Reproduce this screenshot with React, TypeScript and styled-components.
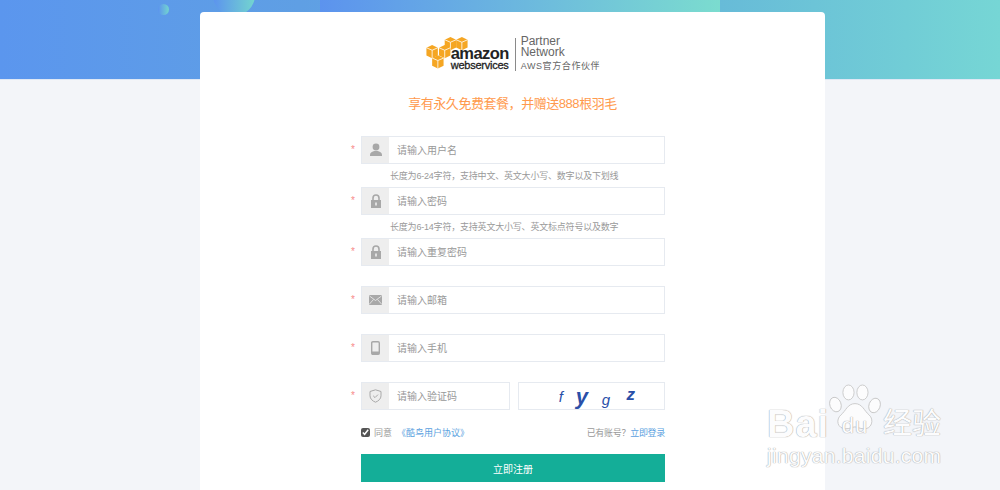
import styled, { createGlobalStyle } from "styled-components";

const GlobalStyle = createGlobalStyle`
  html, body {
    margin: 0;
    padding: 0;
    height: 100%;
    overflow: hidden;
    background: #f3f5f9;
    font-family: "Liberation Sans", "Noto Sans CJK SC", sans-serif;
  }
  * { box-sizing: border-box; }
  input::placeholder { color: #999; opacity: 1; }
`;

const Page = styled.div`
  position: relative;
  width: 1000px;
  height: 490px;
  overflow: hidden;
`;

const Banner = styled.header`
  position: relative;
  height: 80px;
  overflow: hidden;
  background: linear-gradient(90deg, #5b96ee 0%, #5f9fe4 30%, #67bbd8 72%, #76d6d5 100%);
  border-bottom: 1px solid #dfe8f5;
`;

const BannerPanel = styled.div`
  position: absolute;
  left: 320px;
  top: 0;
  width: 400px;
  height: 30px;
  background: linear-gradient(90deg, #5c93ee 0%, #7bdccf 100%);
`;

const Bubble = styled.div<{ $size: number; $left: number; $top: number }>`
  position: absolute;
  left: ${(p) => p.$left}px;
  top: ${(p) => p.$top}px;
  width: ${(p) => p.$size}px;
  height: ${(p) => p.$size}px;
  border-radius: 50%;
  background: linear-gradient(90deg, #5c93ee 0%, #73d5cf 100%);
`;

const Card = styled.main`
  position: relative;
  width: 625px;
  height: 490px;
  margin: -68px 0 0 200px;
  background: #fff;
  border-radius: 4px 4px 0 0;
  padding-top: 22px;
  display: flex;
  flex-direction: column;
  align-items: center;
`;

const LogoRow = styled.div`
  display: flex;
  align-items: center;
  height: 40px;
  margin-left: 1px;
`;

const AwsMark = styled.div`
  width: 25px;
  height: 32px;
  margin-top: -3px;
  flex: none;
  overflow: visible;
`;

const Wordmark = styled.div`
  display: flex;
  flex-direction: column;
  align-items: flex-start;
  padding-top: 9px;
  color: #232323;
  font-weight: 700;
`;

const Amazon = styled.span`
  font-size: 16.5px;
  line-height: 14px;
  letter-spacing: -0.6px;
`;

const WebServices = styled.span`
  font-size: 11px;
  line-height: 11px;
  letter-spacing: -0.25px;
  font-weight: 400;
  -webkit-text-stroke: 0.3px #232323;
`;

const LogoRule = styled.div`
  width: 1px;
  height: 33px;
  margin: 0 5px 0 6px;
  background: #8a8a8a;
`;

const PartnerBlock = styled.div`
  display: flex;
  flex-direction: column;
  color: #666;
`;

const PartnerLine = styled.span`
  font-size: 12px;
  line-height: 11px;
`;

const PartnerCn = styled.span`
  font-size: 9px;
  line-height: 13px;
  margin-top: 2px;
  letter-spacing: 0.6px;
  color: #666;
`;

const Slogan = styled.h2`
  margin: 20px 0 0;
  font-size: 13px;
  line-height: 20px;
  font-weight: 400;
  letter-spacing: -0.45px;
  color: #ff9a4d;
`;

const Form = styled.form`
  width: 304px;
  margin: 22px 0 0 1px;
  display: flex;
  flex-direction: column;
`;

const Field = styled.div<{ $gap: number }>`
  position: relative;
  display: flex;
  flex-direction: column;
  height: ${(p) => p.$gap}px;
`;

const Star = styled.span`
  position: absolute;
  left: -10px;
  top: 8px;
  font-size: 10px;
  line-height: 12px;
  color: #f78b8b;
`;

const InputRow = styled.div`
  display: flex;
  gap: 8px;
`;

const InputBox = styled.div<{ $width?: number }>`
  display: flex;
  width: ${(p) => p.$width ?? 304}px;
  height: 28px;
  border: 1px solid #e6eaf0;
  background: #fff;
`;

const IconCell = styled.div`
  width: 27px;
  flex: none;
  display: flex;
  align-items: center;
  justify-content: center;
  background: #eeeeee;
`;

const TextInput = styled.input`
  flex: 1;
  min-width: 0;
  border: 0;
  outline: 0;
  padding: 0 8px;
  background: transparent;
  font: 10px "Liberation Sans", "Noto Sans CJK SC", sans-serif;
  color: #666;
`;

const Hint = styled.div`
  margin: 5px 0 0 29px;
  font-size: 9px;
  line-height: 14px;
  letter-spacing: -0.2px;
  color: #9a9a9a;
  white-space: nowrap;
`;

const Captcha = styled.div`
  width: 147px;
  height: 28px;
  border: 1px solid #e6eaf0;
  display: flex;
  align-items: flex-start;
  color: #2a4fa8;
`;

const CaptchaGlyph = styled.span<{ $left: number; $top: number; $size: number; $bold?: boolean }>`
  width: ${(p) => p.$left}px;
  padding-top: ${(p) => p.$top}px;
  font-size: ${(p) => p.$size}px;
  font-weight: ${(p) => (p.$bold ? 700 : 400)};
  line-height: 1;
  text-align: right;
  font-style: italic;
`;

const AgreeRow = styled.div`
  display: flex;
  align-items: center;
  justify-content: space-between;
  height: 14px;
  margin-top: 3px;
  font-size: 9px;
  color: #9a9a9a;
`;

const AgreeLeft = styled.label`
  display: flex;
  align-items: center;
`;

const Tick = styled.input`
  width: 9px;
  height: 9px;
  margin: 0 4px 0 0;
  accent-color: #555;
`;

const TextLink = styled.a<{ $indent?: number }>`
  margin-left: ${(p) => p.$indent ?? 0}px;
  color: #5a9fe0;
  text-decoration: none;
`;

const LoginHint = styled.span`
  letter-spacing: -0.3px;
`;

const SubmitButton = styled.button`
  width: 304px;
  height: 28px;
  margin-top: 15px;
  border: 0;
  background: #14ae98;
  color: #fff;
  font: 10px "Liberation Sans", "Noto Sans CJK SC", sans-serif;
`;

const Watermark = styled.div`
  position: absolute;
  left: 767px;
  top: 382px;
  width: 200px;
  height: 90px;
  color: #fcfcfd;
  text-shadow: 0 0 1px #a8a8a8, 0 0 1px #a8a8a8;
  pointer-events: none;
`;

const WatermarkTop = styled.div`
  display: flex;
  align-items: flex-end;
  height: 60px;
`;

const WatermarkBai = styled.span`
  width: 116px;
  font-size: 38px;
  line-height: 36px;
  font-weight: 700;
  letter-spacing: 1px;
`;

const WatermarkCn = styled.span`
  font-size: 29px;
  line-height: 36px;
  letter-spacing: 0;
`;

const WatermarkUrl = styled.div`
  margin-top: 2px;
  font-size: 21px;
  line-height: 24px;
  white-space: nowrap;
  letter-spacing: 0.3px;
`;

const PawBox = styled.div`
  position: absolute;
  left: 61px;
  top: 1px;
  width: 54px;
  height: 58px;
`;

const PawDu = styled.span`
  position: absolute;
  left: 7px;
  top: 31px;
  width: 40px;
  text-align: center;
  font-size: 22px;
  line-height: 24px;
  letter-spacing: 1px;
`;

const Cube = ({ x, y }: { x: number; y: number }) => (
  <g transform={`translate(${x} ${y})`}>
    <path d="M0 2.400 5 0l5 2.400v6.800L5 11.600 0 9.200z" fill="#f5a623" />
    <path d="M0 2.400 5 4.600l5-2.200M5 4.600v7" fill="none" stroke="#fff" strokeWidth="0.7" />
  </g>
);

const UserIcon = () => (
  <svg width="14" height="14" viewBox="0 0 14 14" fill="#a8a8a8">
    <circle cx="7" cy="4" r="3.400" />
    <path d="M1 13v-1.600C1 9.600 3.400 8.600 5.400 8h3.200c2 .6 4.400 1.600 4.400 3.400V13z" />
  </svg>
);

const LockIcon = () => (
  <svg width="12" height="14" viewBox="0 0 12 14">
    <path d="M3 6V4a3 3 0 0 1 6 0v2" fill="none" stroke="#a8a8a8" strokeWidth="1.600" />
    <rect x="1" y="6" width="10" height="8" fill="#a8a8a8" />
    <rect x="5.200" y="8.500" width="1.600" height="3" fill="#eee" />
  </svg>
);

const MailIcon = () => (
  <svg width="13" height="10" viewBox="0 0 13 10">
    <rect width="13" height="10" rx="1" fill="#a8a8a8" />
    <path d="M0.500 1 6.500 5.500 12.500 1M0.500 9 4.500 4.500M12.500 9 8.500 4.500" fill="none" stroke="#eee" strokeWidth="0.800" />
  </svg>
);

const PhoneIcon = () => (
  <svg width="9" height="14" viewBox="0 0 9 14">
    <rect x="0.700" y="0.700" width="7.600" height="12.600" rx="1.200" fill="none" stroke="#a8a8a8" strokeWidth="1.400" />
    <rect x="0.700" y="10.500" width="7.600" height="2.800" fill="#a8a8a8" />
  </svg>
);

const ShieldIcon = () => (
  <svg width="13" height="14" viewBox="0 0 13 14" fill="none" stroke="#a8a8a8" strokeWidth="1">
    <path d="M6.500 .8 12 2.500v4.300c0 3-2.500 5.200-5.500 6.400C3.500 12 1 9.800 1 6.800V2.500z" />
    <path d="m4.200 6.800 1.800 1.800 3-3" />
  </svg>
);

const Paw = () => (
  <svg width="54" height="58" viewBox="0 0 58 60" fill="#fcfcfd" stroke="#bdbdbd" strokeWidth="0.800">
    <ellipse cx="8" cy="22" rx="6" ry="8" transform="rotate(-20 8 22)" />
    <ellipse cx="22" cy="9" rx="6" ry="8" />
    <ellipse cx="37" cy="9" rx="6" ry="8" />
    <ellipse cx="50" cy="23" rx="6" ry="8" transform="rotate(20 50 23)" />
    <path d="M29 21c8 0 10 8 15 12 6 5 3 16-6 15-4 0-6-2-9-2s-5 2-10 2c-9 0-11-10-5-15 5-4 7-12 15-12z" />
  </svg>
);

const App = () => {
  return (
    <Page>
      <GlobalStyle />
      <Banner>
        <BannerPanel />
        <Bubble $size={11} $left={158} $top={4} />
        <Bubble $size={42} $left={213} $top={-26} />
      </Banner>
      <Card>
        <LogoRow>
          <AwsMark>
            <svg width="42" height="32" viewBox="0 0 36 28" overflow="visible">
              <Cube x={16} y={0} />
              <Cube x={26} y={0} />
              <Cube x={0} y={7} />
              <Cube x={11} y={7} />
              <Cube x={5} y={16} />
            </svg>
          </AwsMark>
          <Wordmark>
            <Amazon>amazon</Amazon>
            <WebServices>webservices</WebServices>
          </Wordmark>
          <LogoRule />
          <PartnerBlock>
            <PartnerLine>Partner</PartnerLine>
            <PartnerLine>Network</PartnerLine>
            <PartnerCn>AWS官方合作伙伴</PartnerCn>
          </PartnerBlock>
        </LogoRow>
        <Slogan>享有永久免费套餐，并赠送888根羽毛</Slogan>
        <Form>
          <Field $gap={51}>
            <Star>*</Star>
            <InputBox>
              <IconCell><UserIcon /></IconCell>
              <TextInput placeholder="请输入用户名" />
            </InputBox>
            <Hint>长度为6-24字符，支持中文、英文大小写、数字以及下划线</Hint>
          </Field>
          <Field $gap={51}>
            <Star>*</Star>
            <InputBox>
              <IconCell><LockIcon /></IconCell>
              <TextInput placeholder="请输入密码" />
            </InputBox>
            <Hint>长度为6-14字符，支持英文大小写、英文标点符号以及数字</Hint>
          </Field>
          <Field $gap={48}>
            <Star>*</Star>
            <InputBox>
              <IconCell><LockIcon /></IconCell>
              <TextInput placeholder="请输入重复密码" />
            </InputBox>
          </Field>
          <Field $gap={48}>
            <Star>*</Star>
            <InputBox>
              <IconCell><MailIcon /></IconCell>
              <TextInput placeholder="请输入邮箱" />
            </InputBox>
          </Field>
          <Field $gap={48}>
            <Star>*</Star>
            <InputBox>
              <IconCell><PhoneIcon /></IconCell>
              <TextInput placeholder="请输入手机" />
            </InputBox>
          </Field>
          <Field $gap={40}>
            <Star>*</Star>
            <InputRow>
              <InputBox $width={149}>
                <IconCell><ShieldIcon /></IconCell>
                <TextInput placeholder="请输入验证码" />
              </InputBox>
              <Captcha>
                <CaptchaGlyph $left={44} $top={6} $size={15}>f</CaptchaGlyph>
                <CaptchaGlyph $left={25} $top={3} $size={22} $bold>y</CaptchaGlyph>
                <CaptchaGlyph $left={22} $top={9} $size={15}>g</CaptchaGlyph>
                <CaptchaGlyph $left={25} $top={3} $size={17} $bold>z</CaptchaGlyph>
              </Captcha>
            </InputRow>
          </Field>
          <AgreeRow>
            <AgreeLeft>
              <Tick type="checkbox" defaultChecked />
              同意
              <TextLink $indent={5}>《酷鸟用户协议》</TextLink>
            </AgreeLeft>
            <LoginHint>
              已有账号？<TextLink>立即登录</TextLink>
            </LoginHint>
          </AgreeRow>
          <SubmitButton type="button">立即注册</SubmitButton>
        </Form>
      </Card>
      <Watermark>
        <WatermarkTop>
          <WatermarkBai>Bai</WatermarkBai>
          <WatermarkCn>经验</WatermarkCn>
        </WatermarkTop>
        <PawBox>
          <Paw />
          <PawDu>du</PawDu>
        </PawBox>
        <WatermarkUrl>jingyan.baidu.com</WatermarkUrl>
      </Watermark>
    </Page>
  );
};

export default App;
